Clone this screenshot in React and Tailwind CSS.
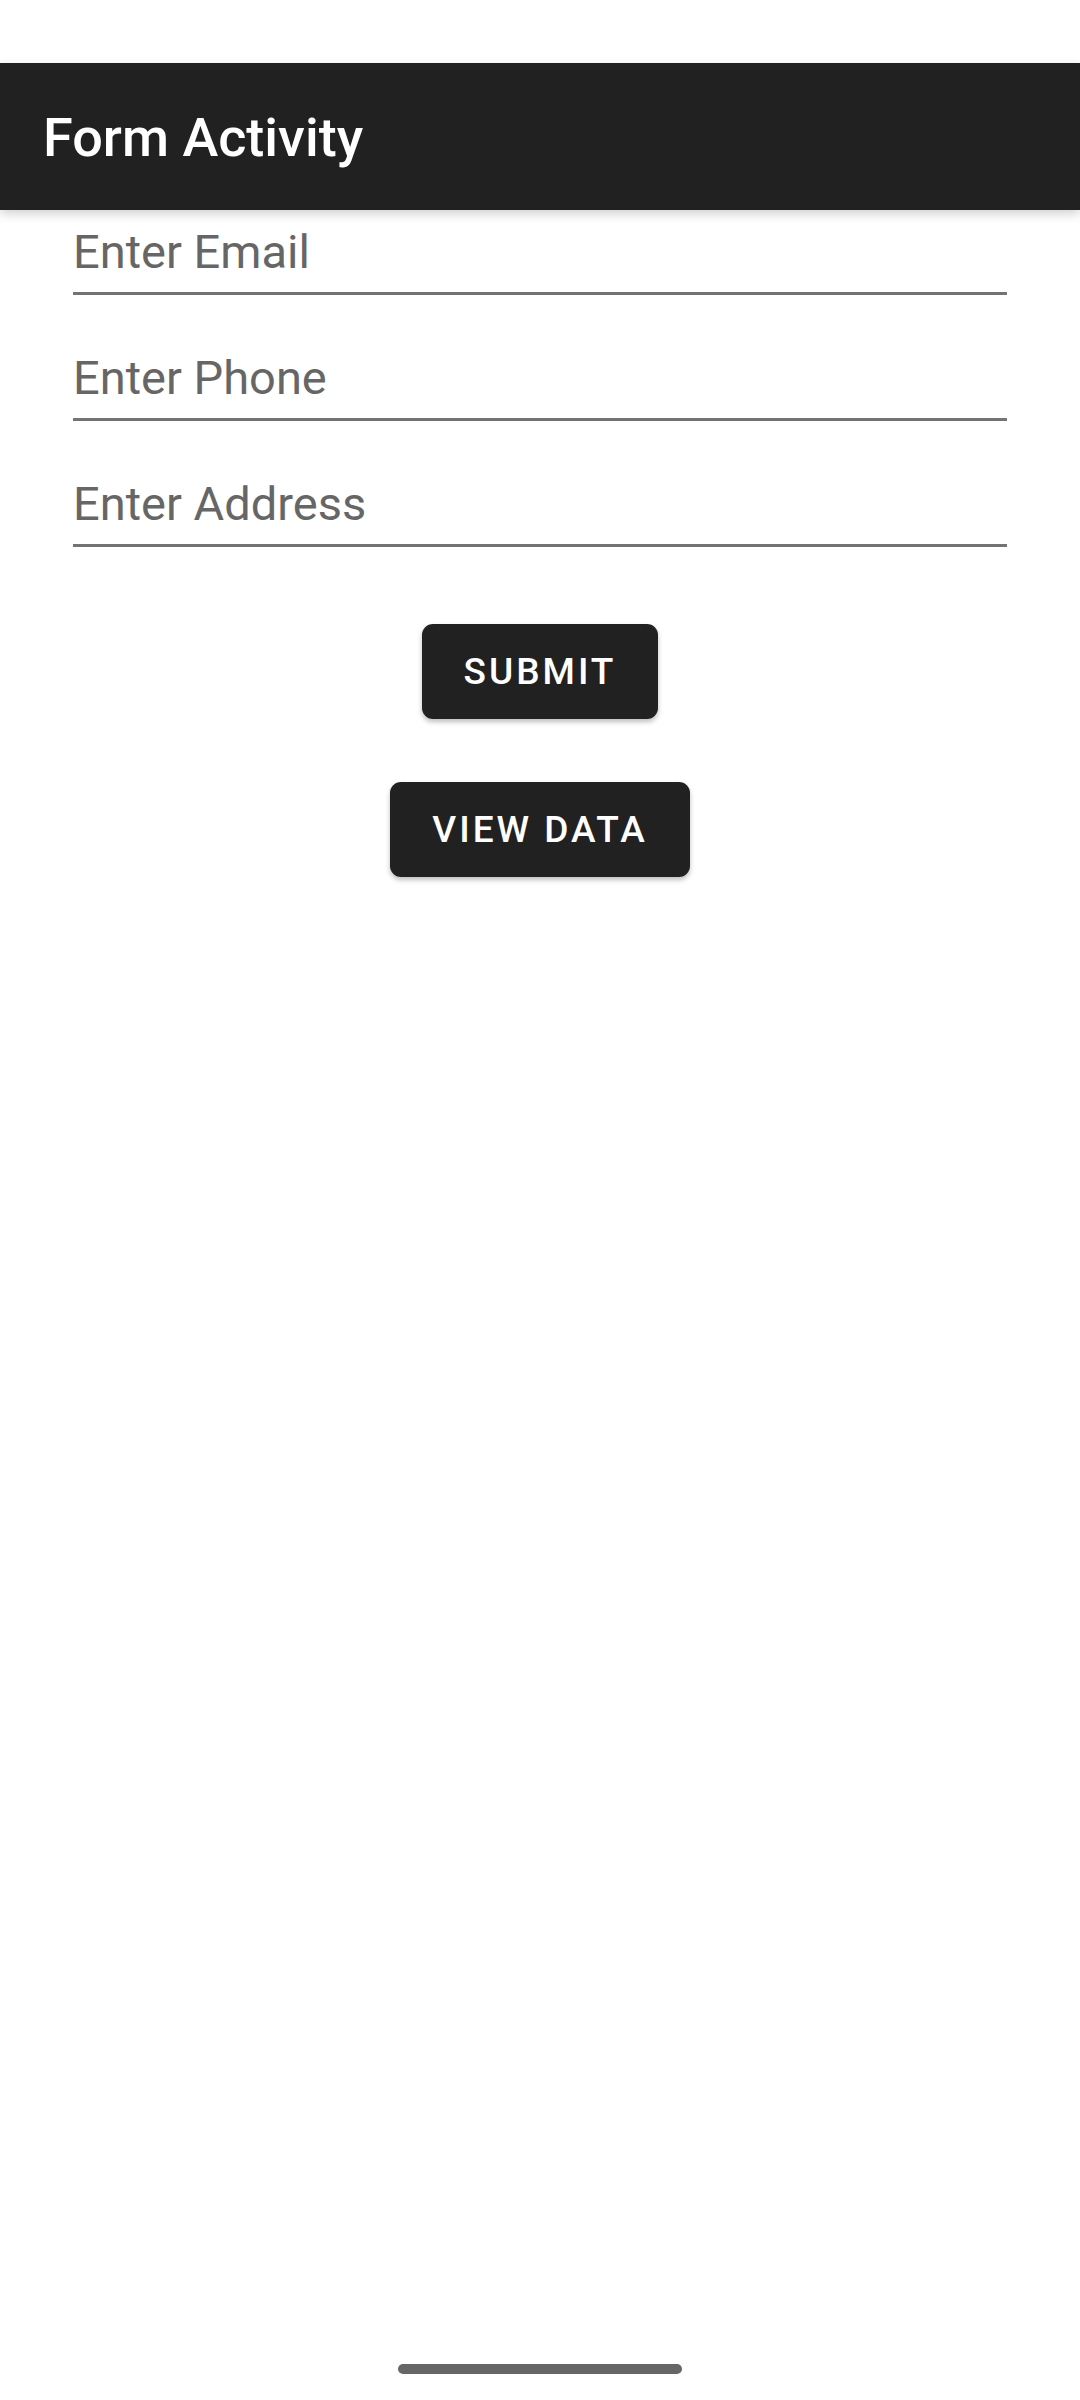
import React from "react";

const Field = ({ hint, className }) => (
  <div
    className={`h-[85px] pt-[13px] pb-[11px] border-b-[3px] border-[#737373] ${className || ""}`}
  >
    <p className="text-[47px] leading-[58px] text-[#666666]">{hint}</p>
  </div>
);

const Button = ({ label }) => (
  <button className="h-[95px] px-[42px] bg-[#212121] text-white rounded-[11px] shadow-[0_3px_5px_rgba(0,0,0,0.25)] text-[37px] font-medium tracking-[3px] leading-none">
    {label}
  </button>
);

const App = () => {
  return (
    <div
      className="w-[1080px] h-[2400px] bg-white flex flex-col"
      style={{ fontFamily: "Roboto, 'Noto Sans', sans-serif" }}
    >
      <div className="h-[63px] bg-white" />
      <div className="h-[147px] bg-[#212121] flex items-center pl-[43px] pt-[2px] shadow-[0_4px_10px_rgba(0,0,0,0.18)] relative z-10">
        <h1 className="text-[54px] font-medium text-white leading-none">
          Form Activity
        </h1>
      </div>

      <div className="px-[73px] flex flex-col">
        <Field hint="Enter Email" />
        <Field hint="Enter Phone" className="mt-[41px]" />
        <Field hint="Enter Address" className="mt-[41px]" />
      </div>

      <div className="flex flex-col items-center gap-[63px] mt-[77px]">
        <Button label="SUBMIT" />
        <Button label="VIEW DATA" />
      </div>

      <div className="mt-auto pb-[26px] flex justify-center">
        <div className="w-[284px] h-[10px] rounded-full bg-[#666666]" />
      </div>
    </div>
  );
};

export default App;
